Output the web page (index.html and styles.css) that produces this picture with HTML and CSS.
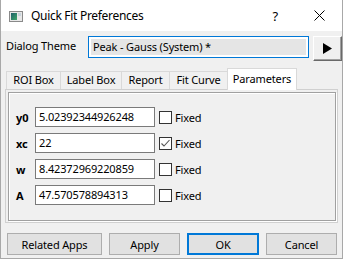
FILE: index.html
```html
<!DOCTYPE html>
<html lang="en">
<head>
  <meta charset="UTF-8">
  <title>Quick Fit Preferences</title>
  <link rel="stylesheet" href="styles.css">
</head>
<body>
  <div class="window">
    <div class="titlebar">
      <svg class="app-icon" width="14" height="11" viewBox="0 0 14 11">
        <defs>
          <linearGradient id="g" x1="0" y1="0" x2="1" y2="1">
            <stop offset="0" stop-color="#1f5f6a"/>
            <stop offset="1" stop-color="#3fa86a"/>
          </linearGradient>
        </defs>
        <rect x="0.5" y="0.5" width="13" height="10" fill="#e8e8e8" stroke="#8a8a8a"/>
        <rect x="2" y="2" width="6" height="7" fill="url(#g)"/>
        <rect x="9" y="2" width="3" height="3" fill="#c8d4dc"/>
      </svg>
      <span class="title">Quick Fit Preferences</span>
      <span class="help">?</span>
      <svg class="close" width="11" height="11" viewBox="0 0 11 11">
        <path d="M0.5 0.5 L10.5 10.5 M10.5 0.5 L0.5 10.5" stroke="#000" stroke-width="1"/>
      </svg>
    </div>

    <div class="content">
      <div class="theme-row">
        <span class="theme-label">Dialog Theme</span>
        <div class="combo"><span>Peak - Gauss (System) *</span></div>
        <button class="arrow">
          <svg width="9" height="11" viewBox="0 0 9 11"><path d="M0 0 L9 5.5 L0 11 Z" fill="#000"/></svg>
        </button>
      </div>

      <div class="tabs">
        <div class="tab tab-roi">ROI Box</div>
        <div class="tab tab-label">Label Box</div>
        <div class="tab tab-report">Report</div>
        <div class="tab tab-fit">Fit Curve</div>
        <div class="tab tab-params active">Parameters</div>
      </div>

      <div class="panel">
        <div class="frame">
          <div class="param-row">
            <span class="param-name">y0</span>
            <div class="field">5.02392344926248</div>
            <span class="check"></span>
            <span class="check-label">Fixed</span>
          </div>
          <div class="param-row">
            <span class="param-name">xc</span>
            <div class="field">22</div>
            <span class="check checked">
              <svg width="11" height="11" viewBox="0 0 11 11"><path d="M1.5 5.5 L4 8 L9.5 2" fill="none" stroke="#555" stroke-width="1.1"/></svg>
            </span>
            <span class="check-label">Fixed</span>
          </div>
          <div class="param-row">
            <span class="param-name">w</span>
            <div class="field">8.42372969220859</div>
            <span class="check"></span>
            <span class="check-label">Fixed</span>
          </div>
          <div class="param-row">
            <span class="param-name">A</span>
            <div class="field">47.570578894313</div>
            <span class="check"></span>
            <span class="check-label">Fixed</span>
          </div>
        </div>
      </div>

      <div class="buttons">
        <button class="btn btn-wide">Related Apps</button>
        <button class="btn">Apply</button>
        <button class="btn btn-default">OK</button>
        <button class="btn">Cancel</button>
      </div>
    </div>
  </div>
</body>
</html>
```

FILE: styles.css
```css
* {
  box-sizing: border-box;
}
body {
  margin: 0;
  padding: 0;
  font-family: "Noto Sans", sans-serif;
  font-size: 11px;
  letter-spacing: -0.15px;
  color: #000;
  background-color: #f0f0f0;
}
.window {
  width: 343px;
  height: 259px;
  border: 1px solid #a8a8a8;
  border-top: none;
  background-color: #f0f0f0;
}
.titlebar {
  height: 31px;
  background-color: #fff;
  display: flex;
  align-items: center;
}
.app-icon {
  margin-left: 8px;
  margin-top: 1px;
}
.title {
  margin-left: 8px;
  font-size: 12px;
  letter-spacing: -0.3px;
}
.help {
  margin-left: auto;
  font-size: 13px;
  margin-right: 36px;
}
.close {
  margin-right: 17px;
}
.content {
  padding-top: 5px;
}
.theme-row {
  display: flex;
  align-items: flex-start;
  margin-left: 5px;
}
.theme-label {
  width: 82px;
  padding-top: 2px;
}
.combo {
  width: 221px;
  height: 22px;
  border: 1px solid #0078d7;
  padding: 2px;
  background-color: #fff;
}
.combo span {
  display: block;
  height: 100%;
  background-color: #e5e5e5;
  padding-left: 2px;
  line-height: 16px;
}
.arrow {
  margin-left: 4px;
  width: 29px;
  height: 25px;
  padding: 0;
  background-color: #f0f0f0;
  border: 1px solid;
  border-color: #fff #696969 #696969 #fff;
  box-shadow: inset -1px -1px 0 #a0a0a0;
  display: flex;
  align-items: center;
  justify-content: center;
}
.tabs {
  display: flex;
  align-items: flex-end;
  margin-left: 5px;
  margin-top: 7px;
  height: 21px;
}
.tab {
  height: 18px;
  border: 1px solid #d9d9d9;
  border-bottom: none;
  margin-right: -1px;
  text-align: center;
  line-height: 16px;
  background-color: #f0f0f0;
}
.tab-roi { width: 55px; }
.tab-label { width: 62px; }
.tab-report { width: 49px; }
.tab-fit { width: 59px; }
.tab-params { width: 70px; }
.tab.active {
  height: 22px;
  background-color: #fff;
  line-height: 19px;
  position: relative;
  z-index: 1;
  margin-bottom: -1px;
}
.panel {
  margin-left: 4px;
  width: 333px;
  height: 134px;
  border: 1px solid #d0d0d0;
  padding: 2px 1px 1px 2px;
}
.frame {
  height: 129px;
  border: 1px solid #a0a0a0;
  box-shadow: inset 1px 1px 0 #fff, 1px 1px 0 #fff;
  padding: 14px 0 0 7px;
}
.param-row {
  display: flex;
  align-items: center;
  height: 20px;
  margin-bottom: 6px;
}
.param-name {
  width: 19px;
  font-weight: bold;
}
.field {
  width: 120px;
  height: 20px;
  border: 1px solid #7a7a7a;
  background-color: #fff;
  padding-left: 3px;
  line-height: 18px;
}
.check {
  margin-left: 4px;
  width: 13px;
  height: 13px;
  border: 1px solid #333;
  background-color: #fff;
  display: flex;
  align-items: center;
  justify-content: center;
}
.check-label {
  margin-left: 3px;
}
.buttons {
  display: flex;
  gap: 7px;
  margin-top: 10px;
  margin-left: 6px;
}
.btn {
  width: 71px;
  height: 22px;
  padding: 0;
  font-family: "Noto Sans", sans-serif;
  font-size: 11px;
  letter-spacing: -0.15px;
  color: #000;
  background-color: #e1e1e1;
  border: 1px solid #adadad;
}
.btn-wide {
  width: 95px;
}
.btn-default {
  width: 72px;
  border: 2px solid #0078d7;
}
```
